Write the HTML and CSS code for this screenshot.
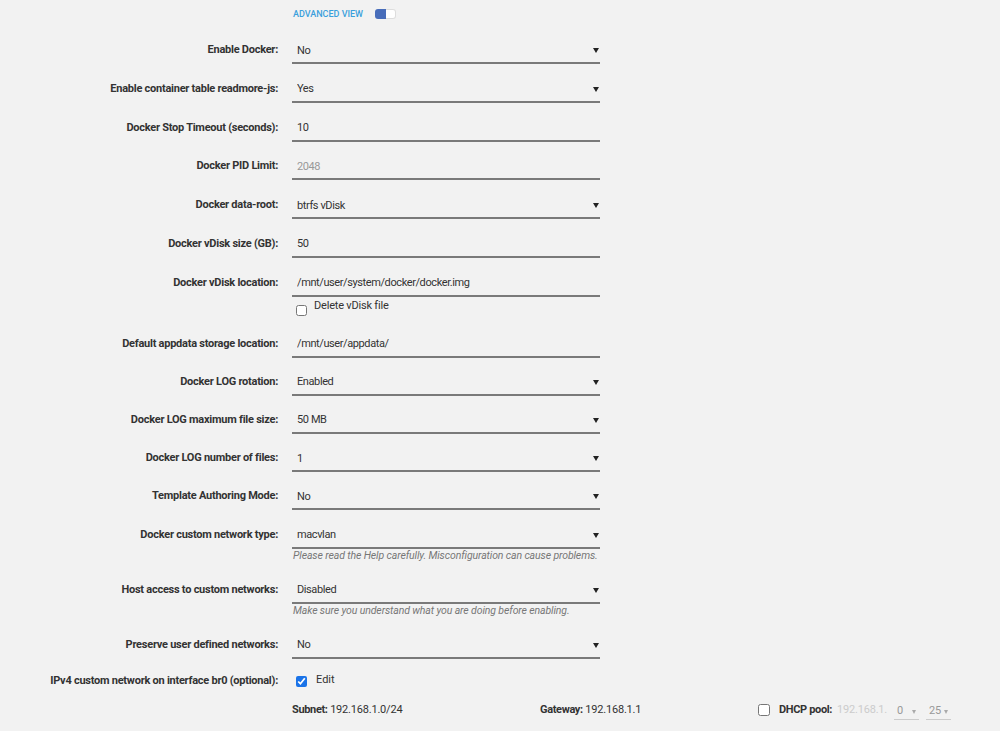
FILE: index.html
```html
<!DOCTYPE html>
<html lang="en">
<head>
  <meta charset="UTF-8">
  <title>Docker Settings</title>
  <link rel="stylesheet" href="styles.css">
</head>
<body>
  <div class="settings">
    <div class="view-bar">
      <span class="view-label">Advanced view</span>
      <span class="switch"><span class="switch-on"></span><span class="switch-off"></span></span>
    </div>

    <form class="settings-form">
      <div class="group">
        <div class="row">
          <label class="row-label">Enable Docker:</label>
          <div class="select-wrap"><select class="control"><option>No</option></select></div>
        </div>

        <div class="row">
          <label class="row-label">Enable container table readmore-js:</label>
          <div class="select-wrap"><select class="control"><option>Yes</option></select></div>
        </div>

        <div class="row">
          <label class="row-label">Docker Stop Timeout (seconds):</label>
          <input class="control" type="text" value="10">
        </div>

        <div class="row">
          <label class="row-label">Docker PID Limit:</label>
          <input class="control" type="text" placeholder="2048">
        </div>

        <div class="row">
          <label class="row-label">Docker data-root:</label>
          <div class="select-wrap"><select class="control"><option>btrfs vDisk</option></select></div>
        </div>

        <div class="row">
          <label class="row-label">Docker vDisk size (GB):</label>
          <input class="control" type="text" value="50">
        </div>

        <div class="row">
          <label class="row-label">Docker vDisk location:</label>
          <div class="field">
            <input class="control" type="text" value="/mnt/user/system/docker/docker.img">
            <label class="check-line"><input type="checkbox" class="check"> Delete vDisk file</label>
          </div>
        </div>
      </div>

      <div class="group group-compact">
        <div class="row">
          <label class="row-label">Default appdata storage location:</label>
          <input class="control" type="text" value="/mnt/user/appdata/">
        </div>

        <div class="row">
          <label class="row-label">Docker LOG rotation:</label>
          <div class="select-wrap"><select class="control"><option>Enabled</option></select></div>
        </div>

        <div class="row">
          <label class="row-label">Docker LOG maximum file size:</label>
          <div class="select-wrap"><select class="control"><option>50 MB</option></select></div>
        </div>

        <div class="row">
          <label class="row-label">Docker LOG number of files:</label>
          <div class="select-wrap"><select class="control"><option>1</option></select></div>
        </div>

        <div class="row">
          <label class="row-label">Template Authoring Mode:</label>
          <div class="select-wrap"><select class="control"><option>No</option></select></div>
        </div>

        <div class="row">
          <label class="row-label">Docker custom network type:</label>
          <div class="field">
            <div class="select-wrap"><select class="control"><option>macvlan</option></select></div>
            <p class="help">Please read the Help carefully. Misconfiguration can cause problems.</p>
          </div>
        </div>

        <div class="row">
          <label class="row-label">Host access to custom networks:</label>
          <div class="field">
            <div class="select-wrap"><select class="control"><option>Disabled</option></select></div>
            <p class="help">Make sure you understand what you are doing before enabling.</p>
          </div>
        </div>

        <div class="row row-last">
          <label class="row-label">Preserve user defined networks:</label>
          <div class="select-wrap"><select class="control"><option>No</option></select></div>
        </div>
      </div>

      <div class="row row-plain">
        <label class="row-label">IPv4 custom network on interface br0 (optional):</label>
        <label class="edit-line"><input type="checkbox" class="check check-blue" checked> Edit</label>
      </div>

      <div class="net-line">
        <span class="net-cell"><b>Subnet:</b> 192.168.1.0/24</span>
        <span class="net-cell"><b>Gateway:</b> 192.168.1.1</span>
        <span class="net-cell dhcp">
          <input type="checkbox" class="check">
          <b>DHCP pool:</b>
          <span class="dim">192.168.1.</span>
          <span class="mini-select">0</span>
          <span class="mini-select">25</span>
        </span>
      </div>
    </form>
  </div>
</body>
</html>
```

FILE: styles.css
```css
body {
  margin: 0;
  background-color: #f2f2f2;
  font-family: Roboto, "Liberation Sans", sans-serif;
  font-size: 11px;
  color: #333;
}

.settings {
  padding-top: 8px;
}

.view-bar {
  display: flex;
  align-items: center;
  height: 12px;
  padding-left: 293px;
  margin-bottom: 18px;
}

.view-label {
  text-transform: uppercase;
  font-size: 9px;
  font-weight: 500;
  letter-spacing: 0;
  color: #3a9fdc;
}

.switch {
  display: flex;
  margin-left: 12px;
  height: 10px;
}

.switch-on {
  width: 11px;
  background-color: #486dba;
  border-radius: 3px 0 0 3px;
}

.switch-off {
  width: 10px;
  background-color: #fff;
  border: 1px solid #ddd;
  border-left: none;
  border-radius: 0 3px 3px 0;
  box-sizing: border-box;
}

.row {
  display: grid;
  grid-template-columns: 278px 308px;
  column-gap: 14px;
  align-items: start;
  margin-bottom: 12.8px;
}

.group-compact .row {
  margin-bottom: 12.2px;
}

.group-compact .row-last {
  margin-bottom: 10.5px;
}

.row-label {
  text-align: right;
  font-weight: 700;
  line-height: 24px;
  letter-spacing: -0.25px;
  color: #333;
}

.control {
  display: block;
  width: 100%;
  height: 26px;
  box-sizing: border-box;
  margin: 0;
  padding: 0 5px;
  border: none;
  border-bottom: 2px solid #7a7a7a;
  background: transparent;
  font-family: inherit;
  font-size: 11px;
  letter-spacing: -0.4px;
  color: #333;
  outline: none;
  appearance: none;
  -webkit-appearance: none;
  border-radius: 0;
}

.control::placeholder {
  color: #999;
}

.select-wrap {
  position: relative;
}

.select-wrap::after {
  content: "";
  position: absolute;
  right: 1px;
  top: 10px;
  border-left: 3px solid transparent;
  border-right: 3px solid transparent;
  border-top: 5px solid #222;
  pointer-events: none;
}

.check-line {
  display: flex;
  align-items: flex-start;
  height: 22px;
  padding-left: 4px;
  line-height: 18px;
  letter-spacing: -0.2px;
}

.check {
  width: 11px;
  height: 11px;
  margin: 8px 7px 0 0;
  accent-color: #1a73e8;
}

.help {
  margin: 0 0 3px;
  padding-left: 1px;
  line-height: 14px;
  white-space: nowrap;
  font-style: italic;
  font-size: 10.5px;
  letter-spacing: -0.12px;
  color: #777;
}

.row-plain {
  margin-bottom: 0;
}

.edit-line {
  display: flex;
  align-items: flex-start;
  padding-left: 4px;
  line-height: 22px;
}

.edit-line .check {
  margin: 7px 9px 0 0;
}

.net-line {
  display: grid;
  grid-template-columns: 248px 218px auto;
  padding-left: 292px;
  margin-top: 5px;
  line-height: 24px;
  letter-spacing: -0.2px;
}

.net-cell b {
  font-weight: 700;
  letter-spacing: -0.35px;
}

.dhcp {
  display: flex;
  align-items: center;
}

.dhcp .check {
  width: 12px;
  height: 12px;
  margin: 0 9px 0 0;
}

.dim {
  color: #ccc;
  margin-left: 5px;
}

.mini-select {
  position: relative;
  width: 25px;
  height: 18px;
  line-height: 18px;
  margin-top: 2px;
  margin-left: 7px;
  padding-left: 3px;
  box-sizing: border-box;
  border-bottom: 1px solid #ccc;
  color: #999;
}

.mini-select::after {
  content: "";
  position: absolute;
  right: 3px;
  top: 8px;
  border-left: 2.5px solid transparent;
  border-right: 2.5px solid transparent;
  border-top: 4px solid #aaa;
}
```
